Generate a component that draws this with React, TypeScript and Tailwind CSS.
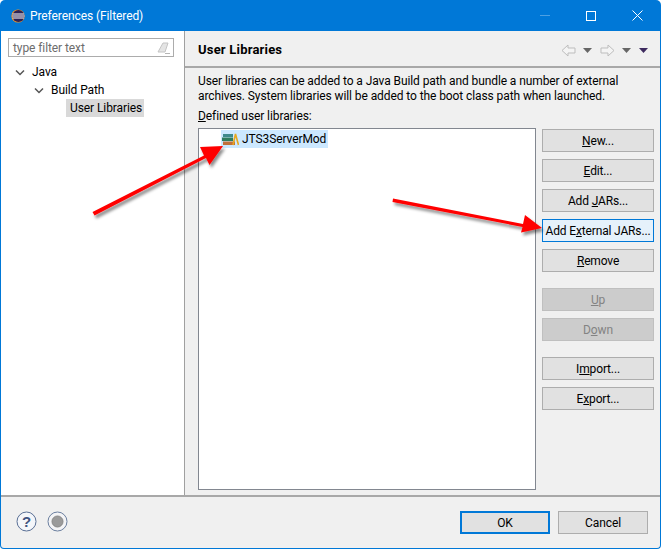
const font = { fontFamily: 'Roboto, "Open Sans", sans-serif' };

function Btn({
  children,
  disabled,
  focused,
}: {
  children: React.ReactNode;
  disabled?: boolean;
  focused?: boolean;
}) {
  let cls = "border-[#adadad] bg-[#e1e1e1] text-black";
  if (disabled) cls = "border-[#bfbfbf] bg-[#cccccc] text-[#838383]";
  if (focused) cls = "border-[#0078d7] bg-[#e5f1fb] text-black";
  return (
    <div className={`flex h-[23px] w-[112px] items-center justify-center border text-[12px] leading-none tracking-[-0.15px] whitespace-nowrap ${cls}`}>
      <span>{children}</span>
    </div>
  );
}

function Chevron() {
  return (
    <svg width="10" height="7" viewBox="0 0 10 7" className="shrink-0">
      <path d="M1 1.5 L5 5.5 L9 1.5" fill="none" stroke="#555" strokeWidth="1.5" />
    </svg>
  );
}

function NavArrow({ flip }: { flip?: boolean }) {
  return (
    <svg width="15" height="13" viewBox="0 0 15 13" className={flip ? "-scale-x-100" : ""}>
      <path d="M1 6.5 L7 1 V4 H14 V9 H7 V12 Z" fill="#f4f4f4" stroke="#bdbdbd" strokeWidth="1" />
    </svg>
  );
}

function Caret({ color }: { color: string }) {
  return (
    <svg width="9" height="5" viewBox="0 0 9 5">
      <path d="M0 0 H9 L4.5 5 Z" fill={color} />
    </svg>
  );
}

function EclipseIcon() {
  return (
    <svg width="14" height="14" viewBox="0 0 14 14">
      <circle cx="7" cy="7" r="6.6" fill="#f7941e" />
      <circle cx="7.4" cy="7" r="6" fill="#2c2255" />
      <path d="M1.5 5 H13.2 M1.2 7 H13.6 M1.5 9 H13.2" stroke="#fff" strokeWidth="1" />
    </svg>
  );
}

function LibraryIcon() {
  return (
    <svg width="17" height="14" viewBox="0 0 17 14">
      <rect x="1" y="2" width="10" height="3" fill="#3f8a8c" />
      <rect x="0" y="5.5" width="11" height="3.5" fill="#2f7d5e" />
      <rect x="1" y="9.5" width="12" height="3.5" fill="#c0703a" />
      <path d="M11 13 L13.5 2 L16.5 13" fill="none" stroke="#e8a820" strokeWidth="1.6" />
    </svg>
  );
}

export default function App() {
  return (
    <div className="relative flex h-[549px] w-[661px] flex-col overflow-hidden bg-white text-[12px] tracking-[-0.09px] text-black" style={font}>
      <div className="flex h-[31px] shrink-0 items-center rounded-t-[5px] bg-[#0078d7] pl-[11px] pr-[18px] text-white">
        <EclipseIcon />
        <span className="ml-[5px] text-[12px]">Preferences (Filtered)</span>
        <div className="ml-auto flex items-center gap-[36px]">
          <div className="h-px w-[10px] bg-[#4da0e3]" />
          <div className="h-[10px] w-[10px] border border-white" />
          <svg width="11" height="11" viewBox="0 0 11 11">
            <path d="M0.5 0.5 L10.5 10.5 M10.5 0.5 L0.5 10.5" stroke="#fff" strokeWidth="1" />
          </svg>
        </div>
      </div>

      <div className="flex min-h-0 flex-1 flex-col rounded-b-[4px] border-x border-b border-[#0078d7] bg-[#f0f0f0]">
        <div className="flex h-[464px] shrink-0">
          <div className="flex w-[183px] shrink-0 flex-col bg-white pl-[7px] pt-[7px]">
            <div className="flex h-[19px] w-[166px] items-center justify-between border border-[#acacac] pl-[4px] pr-[2px] text-[#6d6d6d]">
              <span>type filter text</span>
              <svg width="14" height="14" viewBox="0 0 14 14">
                <path d="M1 11 L6 2 H11 L8 11 Z" fill="#e4e4e4" stroke="#c4c4c4" />
                <path d="M8 12.5 H13" stroke="#b5b5b5" />
              </svg>
            </div>
            <div className="mt-[6px] flex h-[18px] items-center pl-[7px]">
              <Chevron />
              <span className="ml-[7px]">Java</span>
            </div>
            <div className="flex h-[18px] items-center pl-[26px]">
              <Chevron />
              <span className="ml-[7px]">Build Path</span>
            </div>
            <div className="ml-[58px] flex h-[18px] w-[78px] items-center bg-[#d9d9d9] pl-[4px] whitespace-nowrap">
              User Libraries
            </div>
          </div>
          <div className="w-px shrink-0 bg-[#a0a0a0]" />
          <div className="flex min-w-0 flex-1 flex-col">
            <div className="flex h-[37px] shrink-0 items-center justify-between border-b-2 border-[#a8a8a8] pl-[13px] pr-[12px] pt-[3px]">
              <span className="text-[13px] font-bold tracking-[0.2px]">User Libraries</span>
              <div className="flex items-center">
                <NavArrow />
                <div className="ml-[7px]"><Caret color="#666666" /></div>
                <div className="ml-[8px]"><NavArrow flip /></div>
                <div className="ml-[7px]"><Caret color="#666666" /></div>
                <div className="ml-[8px]"><Caret color="#3d2a5e" /></div>
              </div>
            </div>
            <div className="flex min-h-0 flex-1 flex-col pl-[13px] pr-[6px] pt-[6px]">
              <p className="leading-[15px]">
                User libraries can be added to a Java Build path and bundle a number of external
                <br />
                archives. System libraries will be added to the boot class path when launched.
              </p>
              <p className="mt-[4px] leading-[16px]"><u>D</u>efined user libraries:</p>
              <div className="mt-[4px] flex min-h-0 flex-1 gap-[6px] pb-[5px]">
                <div className="w-[338px] shrink-0 border border-[#828790] bg-white pl-[22px] pt-px">
                  <div className="flex h-[18px] w-[107px] items-center bg-[#cce8ff] pl-px">
                    <LibraryIcon />
                    <span className="ml-[3px]">JTS3ServerMod</span>
                  </div>
                </div>
                <div className="flex flex-col pt-px">
                  <div className="flex flex-col gap-[7px]">
                    <Btn><u>N</u>ew...</Btn>
                    <Btn><u>E</u>dit...</Btn>
                    <Btn>Add <u>J</u>ARs...</Btn>
                    <Btn focused>Add E<u>x</u>ternal JARs...</Btn>
                    <Btn><u>R</u>emove</Btn>
                  </div>
                  <div className="mt-[16px] flex flex-col gap-[7px]">
                    <Btn disabled><u>U</u>p</Btn>
                    <Btn disabled>D<u>o</u>wn</Btn>
                  </div>
                  <div className="mt-[16px] flex flex-col gap-[7px]">
                    <Btn>I<u>m</u>port...</Btn>
                    <Btn>E<u>x</u>port...</Btn>
                  </div>
                </div>
              </div>
            </div>
          </div>
        </div>
        <div className="flex min-h-0 flex-1 items-center border-t-2 border-[#a8a8a8] pl-[15px] pr-[12px]">
          <svg width="21" height="21" viewBox="0 0 21 21" className="-mt-[2px]">
            <circle cx="10.5" cy="10.5" r="9.5" fill="#f4f6fa" stroke="#5a7096" strokeWidth="1" />
            <text x="10.5" y="15.5" textAnchor="middle" fontSize="15" fontWeight="700" fill="#3f5480" fontFamily="Liberation Sans, sans-serif">?</text>
          </svg>
          <svg width="21" height="21" viewBox="0 0 21 21" className="-mt-[2px] ml-[10px]">
            <circle cx="10.5" cy="10.5" r="9.5" fill="#f4f4f6" stroke="#6b7f9f" strokeWidth="1" />
            <circle cx="10.5" cy="10.5" r="5.5" fill="#9a9a9a" stroke="#888" />
          </svg>
          <div className="ml-auto flex gap-[8px]">
            <div className="flex h-[23px] w-[90px] items-center justify-center border-2 border-[#0078d7] bg-[#e1e1e1]">OK</div>
            <div className="flex h-[23px] w-[90px] items-center justify-center border border-[#adadad] bg-[#e1e1e1]">Cancel</div>
          </div>
        </div>
      </div>

      <svg className="pointer-events-none absolute left-0 top-0" width="661" height="549" viewBox="0 0 661 549">
        <defs>
          <filter id="arrowShadow" x="-20%" y="-40%" width="140%" height="180%">
            <feDropShadow dx="2" dy="3" stdDeviation="1.6" floodColor="#000" floodOpacity="0.45" />
          </filter>
        </defs>
        <g fill="#ff0000" filter="url(#arrowShadow)">
          <polygon points="92.5,212 204,155.5 200,147 223,146 209.5,165 206,158 94.5,215.5" />
          <polygon points="393,198.5 523,224 525,215 542,228 521,232.5 522.5,227 392.5,202" />
        </g>
      </svg>
    </div>
  );
}
